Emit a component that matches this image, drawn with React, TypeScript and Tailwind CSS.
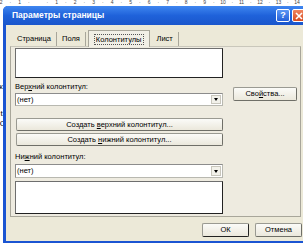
import React from 'react';

const font = { fontFamily: '"Liberation Sans", Arial, sans-serif' };

// ruler labels every half unit (9.25px), first centre at x=1
const ruler = ['2', '·', '1', '·', '', '·', '1', '·', '2', '·', '3', '·', '4', '·', '5', '·', '6', '·', '7', '·', '8', '·', '9', '·', '10', '·', '11', '·', '12', '·', '13', '·', '14', '·'];

function Btn({ children, className = '' }: { children: React.ReactNode; className?: string }) {
  return (
    <div
      className={`flex items-center justify-center rounded-[2px] border border-[#9a9a92] border-r-[#6f6f68] border-b-[#6f6f68] bg-gradient-to-b from-[#fbfbf8] to-[#ebe8dc] text-[7.5px] text-black ${className}`}
    >
      <span>{children}</span>
    </div>
  );
}

function Select() {
  return (
    <div className="flex h-full items-stretch border border-[#8c8c8c] border-r-[#b8b8b0] border-b-[#b8b8b0] bg-white">
      <div className="flex flex-1 items-center pl-[1px] text-[7.5px] text-black">(нет)</div>
      <div className="m-[1px] flex w-[10px] items-center justify-center border border-[#c8c6bc] bg-[#f2f1ea]">
        <div className="h-0 w-0 border-l-[2.5px] border-r-[2.5px] border-t-[3px] border-l-transparent border-r-transparent border-t-black" />
      </div>
    </div>
  );
}

function Tab({ label, active = false }: { label: string; active?: boolean }) {
  return (
    <div
      className={`flex items-center px-[5px] text-[7.5px] text-black ${
        active
          ? 'relative z-10 -mb-[1px] h-[17px] border border-b-0 border-[#a8a69a] bg-[#f1efe6]'
          : 'mt-[2px] h-[14px] border-r border-[#a8a69a]'
      }`}
    >
      {active ? <span className="border border-dotted border-[#555] px-[1px] leading-[9px]">{label}</span> : label}
    </div>
  );
}

export default function App() {
  return (
    <div className="h-[250px] w-[303px] overflow-hidden bg-white" style={font}>
      {/* ruler */}
      <div className="flex h-[6px] overflow-hidden text-[5px] leading-[5px] text-[#444]">
        <div className="-ml-[3.6px] flex">
          {ruler.map((r, i) => (
            <span key={i} className="w-[9.25px] shrink-0 text-center">
              {r}
            </span>
          ))}
        </div>
      </div>

      <div className="flex">
        {/* document text peeking out */}
        <div className="flex w-[3px] shrink-0 flex-col items-end overflow-hidden text-[8px] leading-[9px] text-black">
          <span className="mt-[76px] -mr-[2px]">к,</span>
          <span className="mt-[18px] -mr-[2px]">t.</span>
          <span className="mt-[1px] -mr-[3px]">О</span>
        </div>

        {/* dialog */}
        <div className="flex h-[237px] w-[305px] shrink-0 flex-col rounded-t-[5px] border-b-[2px] border-l-[3px] border-[#1b55d2] bg-[#ece9d8]">
          {/* title bar */}
          <div className="-ml-[3px] flex h-[19px] items-center rounded-tl-[5px] bg-gradient-to-b from-[#3f86f0] via-[#1f62da] to-[#1a56cc] pl-[9px] pr-[2px]">
            <span className="flex-1 text-[8.5px] font-bold text-white">Параметры страницы</span>
            <div className="mr-[2px] flex h-[13px] w-[14px] items-center justify-center rounded-[2px] border border-white bg-gradient-to-b from-[#5c97f5] to-[#2560d8] text-[9px] font-bold leading-none text-white">
              ?
            </div>
            <div className="flex h-[13px] w-[14px] items-center justify-center rounded-[2px] border border-white bg-gradient-to-b from-[#f0845e] to-[#d84a1c]">
              <svg width="8" height="8" viewBox="0 0 8 8">
                <path d="M1 1 L7 7 M7 1 L1 7" stroke="white" strokeWidth="1.6" />
              </svg>
            </div>
          </div>

          {/* body */}
          <div className="flex flex-1 flex-col pl-[4px] pr-[7px] pt-[5px]">
            <div className="flex h-[16px] items-end pl-[2px]">
              <Tab label="Страница" />
              <Tab label="Поля" />
              <div className="w-[2px]" />
              <Tab label="Колонтитулы" active />
              <div className="w-[2px]" />
              <Tab label="Лист" />
            </div>

            {/* panel */}
            <div className="flex h-[171px] border border-[#a8a69a] border-t-[#c9c7bb] bg-[#eeebe0] pl-[4px]">
              <div className="flex w-[208px] flex-col">
                <div className="mt-[1px] h-[30px] border border-[#6e6e6e] border-r-[#222] border-b-[#222] bg-white" />
                <div className="mt-[3px] h-[12px] text-[7.5px] leading-[12px] text-black">
                  Вер<u>х</u>ний колонтитул:
                </div>
                <div className="h-[13px]">
                  <Select />
                </div>
                <Btn className="ml-[1px] mt-[12px] h-[13px]">
                  Создать <u>в</u>ерхний колонтитул...
                </Btn>
                <Btn className="ml-[1px] mt-[2px] h-[13px]">
                  Создать <u>н</u>ижний колонтитул...
                </Btn>
                <div className="mt-[5px] h-[12px] text-[7.5px] leading-[12px] text-black">
                  Ни<u>ж</u>ний колонтитул:
                </div>
                <div className="mt-[1px] h-[14px]">
                  <Select />
                </div>
                <div className="mt-[3px] h-[33px] border border-[#6e6e6e] border-r-[#222] border-b-[#222] bg-white" />
              </div>
              <div className="ml-[10px] flex flex-col">
                <Btn className="mt-[40px] h-[14px] w-[64px]">
                  Сво<u>й</u>ства...
                </Btn>
              </div>
            </div>

            {/* buttons */}
            <div className="mr-[-1px] mt-[6px] flex h-[14px] justify-end gap-[6px]">
              <Btn className="w-[47px] border-[#3c3c3c] border-r-[#222] border-b-[#222]">ОК</Btn>
              <Btn className="w-[47px]">Отмена</Btn>
            </div>
          </div>
        </div>
      </div>
    </div>
  );
}
